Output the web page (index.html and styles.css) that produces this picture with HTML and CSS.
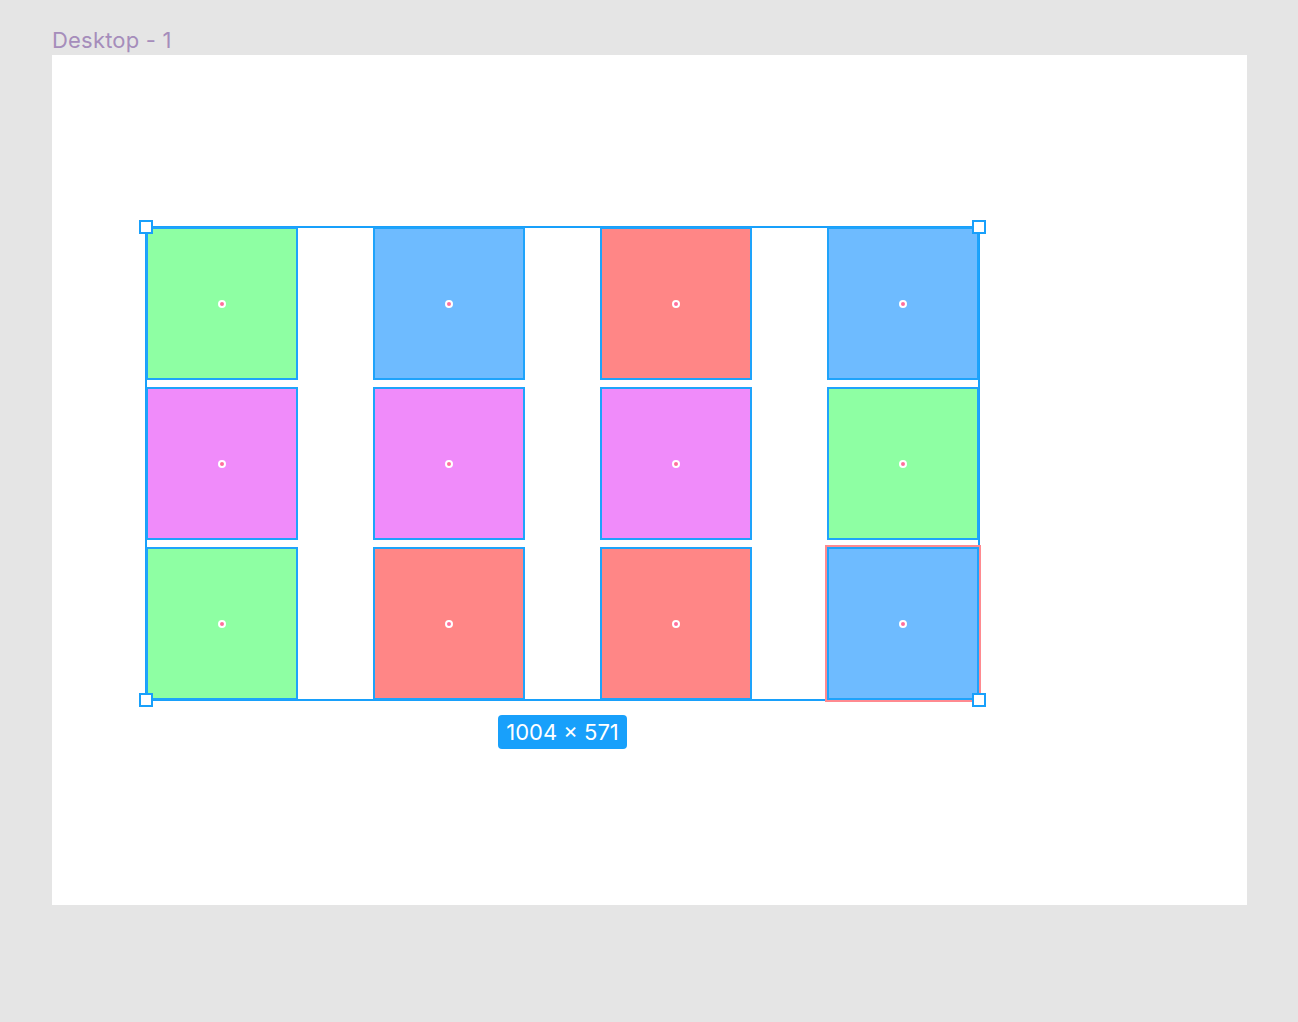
FILE: index.html
```html
<!DOCTYPE html>
<html>
  <head>
    <title>Desktop - 1</title>
    <link rel="stylesheet" href="styles.css">
  </head>
  <body>
    <div class="canvas">
      <div class="frame-label">Desktop - 1</div>
      <div class="frame">
        <div class="selection-wrap">
          <div class="selection">
            <div class="grid">
              <div class="cell green"><span class="dot"></span></div>
              <div class="cell blue"><span class="dot"></span></div>
              <div class="cell red"><span class="dot"></span></div>
              <div class="cell blue"><span class="dot"></span></div>
              <div class="cell pink"><span class="dot"></span></div>
              <div class="cell pink"><span class="dot"></span></div>
              <div class="cell pink"><span class="dot"></span></div>
              <div class="cell green"><span class="dot"></span></div>
              <div class="cell green"><span class="dot"></span></div>
              <div class="cell red"><span class="dot"></span></div>
              <div class="cell red"><span class="dot"></span></div>
              <div class="cell blue hovered"><span class="dot"></span></div>
            </div>
            <span class="handle tl"></span>
            <span class="handle tr"></span>
            <span class="handle bl"></span>
            <span class="handle br"></span>
          </div>
          <div class="size-badge">1004 × 571</div>
        </div>
      </div>
    </div>
  </body>
</html>
```

FILE: styles.css
```css
body {
  margin: 0;
  background-color: #e5e5e5;
  font-family: Inter, "Noto Sans", sans-serif;
}
.canvas {
  padding: 27px 51px 0 52px;
  height: 1022px;
  box-sizing: border-box;
}
.frame-label {
  font-size: 22px;
  color: #a58dbb;
  height: 28px;
  line-height: 26px;
  letter-spacing: 0.2px;
}
.frame {
  background-color: white;
  height: 850px;
  padding: 171px 0 0 93px;
  box-sizing: border-box;
}
.selection-wrap {
  width: 835px;
  display: flex;
  flex-direction: column;
  align-items: center;
}
.selection {
  position: relative;
  width: 835px;
  box-sizing: border-box;
  border: 2px solid #18a0fb;
}
.grid {
  display: grid;
  grid-template-columns: repeat(4, 152px);
  grid-auto-rows: 153px;
  justify-content: space-between;
  row-gap: 7px;
  margin: -1px;
}
.cell {
  border: 2px solid #1ea3fb;
  display: flex;
  align-items: center;
  justify-content: center;
}
.green {
  background-color: #8effa3;
}
.blue {
  background-color: #6ebbff;
}
.red {
  background-color: #ff8686;
}
.pink {
  background-color: #f08bfa;
}
.hovered {
  box-shadow: 0 0 0 2px #ff8a90;
}
.dot {
  width: 4px;
  height: 4px;
  border-radius: 50%;
  background-color: #ff6f9c;
  border: 2px solid white;
}
.handle {
  position: absolute;
  width: 10px;
  height: 10px;
  background-color: white;
  border: 2px solid #18a0fb;
}
.tl {
  top: -8px;
  left: -8px;
}
.tr {
  top: -8px;
  right: -8px;
}
.bl {
  bottom: -8px;
  left: -8px;
}
.br {
  bottom: -8px;
  right: -8px;
}
.size-badge {
  margin-top: 14px;
  background-color: #18a0fb;
  color: white;
  font-size: 22px;
  padding: 4px 8px;
  border-radius: 4px;
  line-height: 26px;
}
```
